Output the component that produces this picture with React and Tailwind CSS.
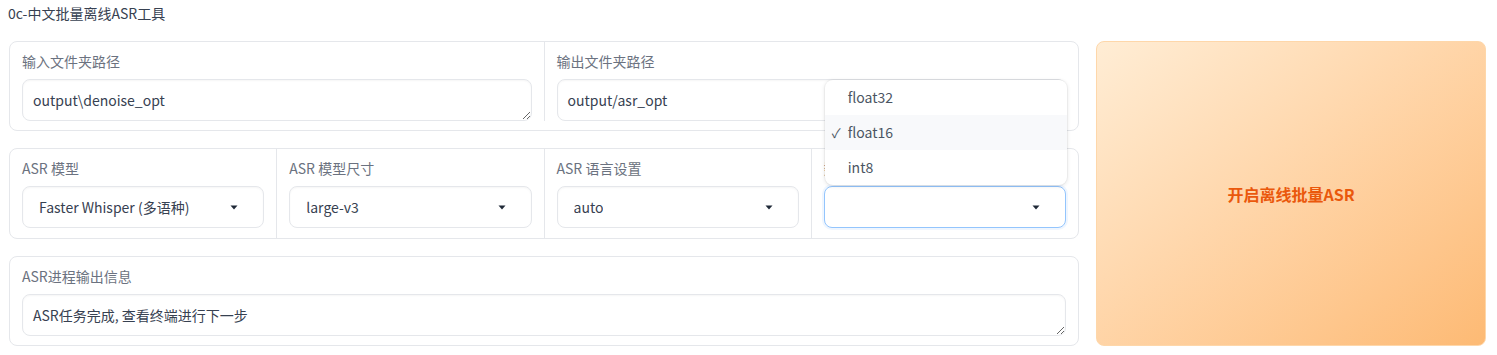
import React from 'react';

const font = { fontFamily: '"Noto Sans CJK SC", "Noto Sans", sans-serif' };

const Caret = () => (
  <svg width="8" height="5" viewBox="0 0 8 5" className="shrink-0">
    <path d="M0.5 0.5 L7.5 0.5 L4 4.5 Z" fill="#1f2937" />
  </svg>
);

function Cell({ label, children, className = '' }) {
  return (
    <div className={`flex-1 min-w-0 px-3 pt-[9px] ${className}`}>
      <div className="text-[14px] leading-5 text-[#6b7280] mb-2 whitespace-nowrap">{label}</div>
      {children}
    </div>
  );
}

function TextBox({ value }) {
  return (
    <textarea
      readOnly
      defaultValue={value}
      rows={1}
      className="block w-full h-[42px] px-[10px] py-[10px] text-[14px] leading-5 text-[#374151] bg-white border border-[#e5e7eb] rounded-lg shadow-[inset_0_1px_2px_rgba(0,0,0,0.04)] outline-none resize-y"
      style={font}
    />
  );
}

function Dropdown({ value, focused }) {
  return (
    <div
      className={`flex items-center justify-between h-[42px] pl-4 pr-[25px] text-[14px] text-[#374151] bg-white rounded-lg border ${
        focused ? 'border-[#93c5fd] shadow-[0_0_0_2px_#eff6ff]' : 'border-[#e5e7eb] shadow-[inset_0_1px_2px_rgba(0,0,0,0.04)]'
      }`}
    >
      <span className="truncate">{value}</span>
      <Caret />
    </div>
  );
}

export default function App() {
  const options = [
    { v: 'float32', sel: false },
    { v: 'float16', sel: true },
    { v: 'int8', sel: false },
  ];

  return (
    <div className="w-[1497px] h-[355px] bg-white pl-[9px] pr-[11px] pt-[3px] overflow-hidden" style={font}>
      <div className="text-[14px] leading-5 text-[#374151] -ml-[1px]">0c-中文批量离线ASR工具</div>

      <div className="flex gap-[17px] mt-[18px]">
        {/* left column */}
        <div className="flex-1 flex flex-col gap-[17px]">
          <div className="flex border border-[#e5e7eb] rounded-lg bg-white divide-x divide-[#e5e7eb] pb-[9px]">
            <Cell label="输入文件夹路径">
              <TextBox value="output\denoise_opt" />
            </Cell>
            <Cell label="输出文件夹路径">
              <TextBox value="output/asr_opt" />
            </Cell>
          </div>

          <div className="flex border border-[#e5e7eb] rounded-lg bg-white divide-x divide-[#e5e7eb]">
            <Cell label="ASR 模型" className="pb-[10px]">
              <Dropdown value="Faster Whisper (多语种)" />
            </Cell>
            <Cell label="ASR 模型尺寸" className="pb-[10px]">
              <Dropdown value="large-v3" />
            </Cell>
            <Cell label="ASR 语言设置" className="pb-[10px]">
              <Dropdown value="auto" />
            </Cell>
            <Cell label="数据类型精度" className="relative pb-[10px]">
              <Dropdown value="" focused />
              <div className="absolute left-[13px] right-[11px] bottom-[53px] bg-white rounded-lg shadow-[0_1px_4px_rgba(0,0,0,0.12),0_0_0_1px_rgba(0,0,0,0.03)] overflow-hidden z-10">
                {options.map((o) => (
                  <div
                    key={o.v}
                    className={`flex items-center h-[35px] text-[14px] text-[#4b5563] ${o.sel ? 'bg-[#f8f9fb]' : ''}`}
                  >
                    <span className="w-[23px] pl-[7px] text-[13px]">{o.sel ? '✓' : ''}</span>
                    <span>{o.v}</span>
                  </div>
                ))}
              </div>
            </Cell>
          </div>

          <div className="flex border border-[#e5e7eb] rounded-lg bg-white pb-[9px]">
            <Cell label="ASR进程输出信息">
              <TextBox value="ASR任务完成, 查看终端进行下一步" />
            </Cell>
          </div>
        </div>

        {/* right button */}
        <button
          className="w-[390px] h-[305px] shrink-0 flex items-center justify-center rounded-lg border border-[#fed7aa] bg-linear-to-br from-[#ffedd5] to-[#fdba74] text-[16px] font-semibold text-[#ea580c]"
          style={font}
        >
          开启离线批量ASR
        </button>
      </div>
    </div>
  );
}
